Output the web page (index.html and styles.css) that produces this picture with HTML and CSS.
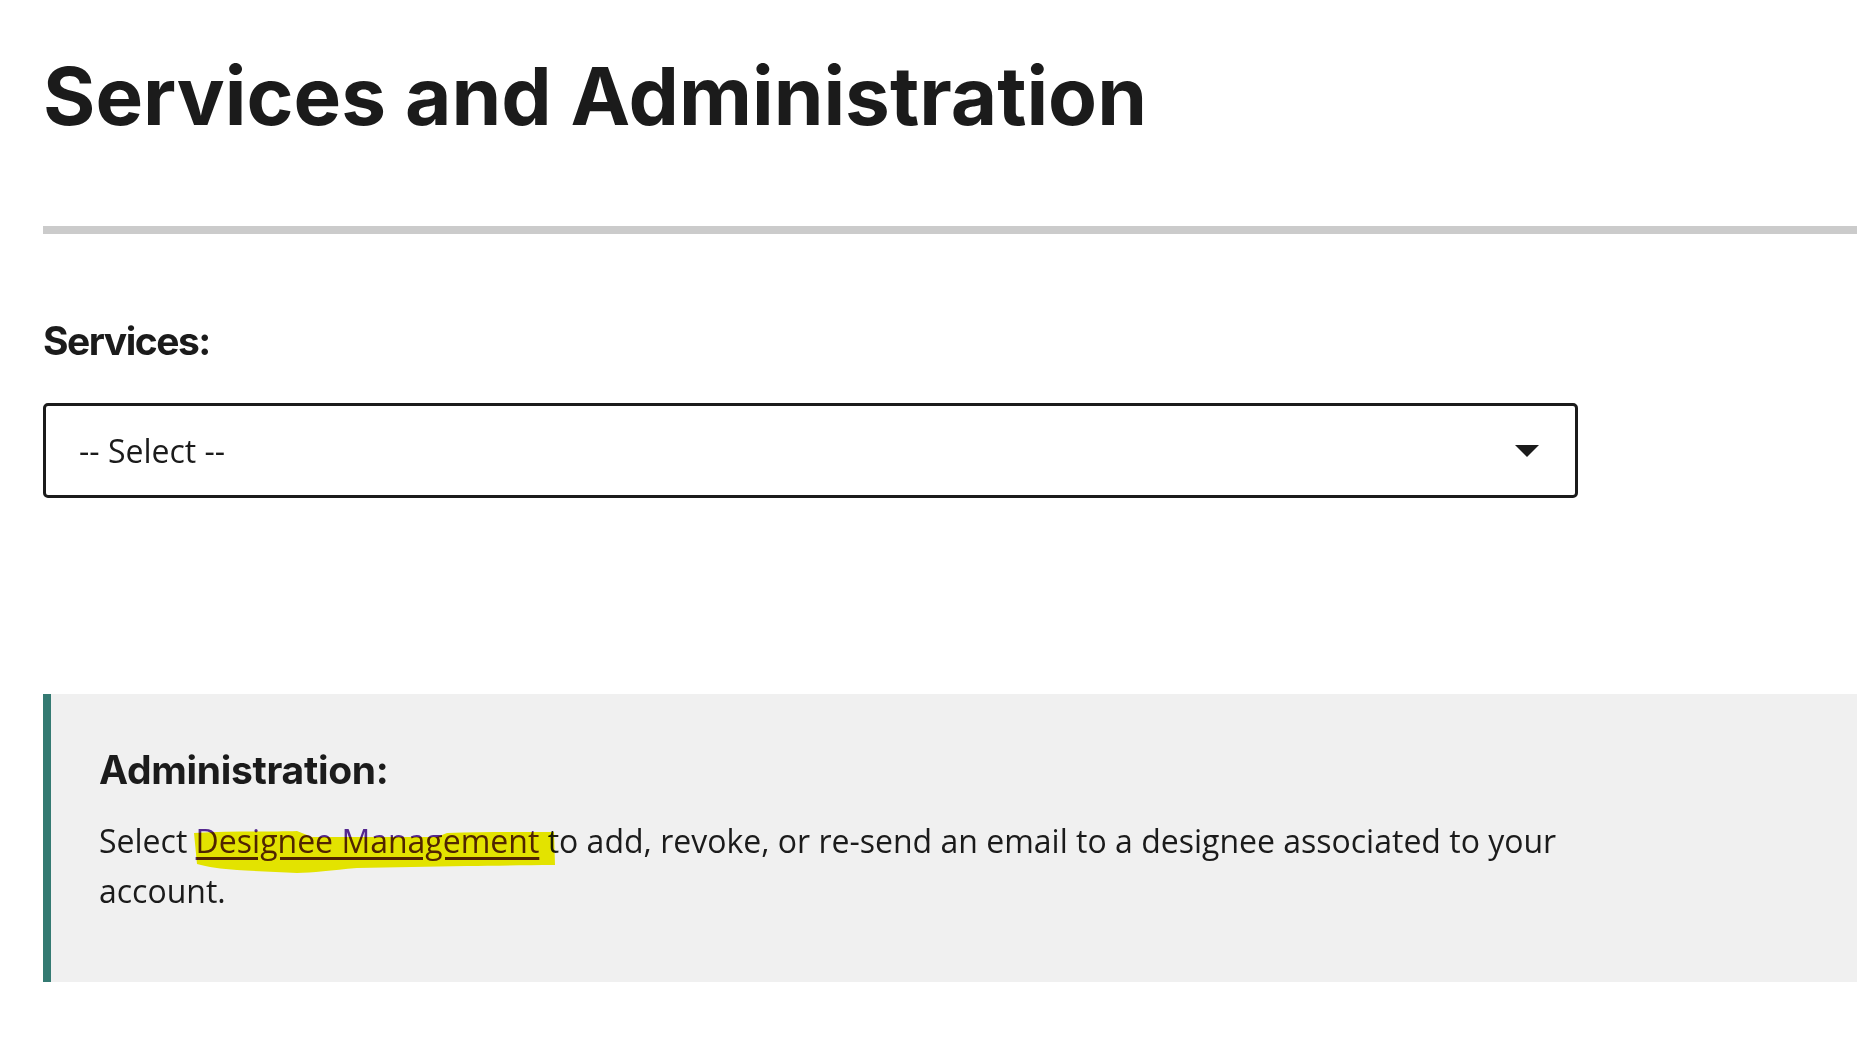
FILE: index.html
```html
<!DOCTYPE html>
<html lang="en">
<head>
<meta charset="utf-8">
<title>Services and Administration</title>
<link rel="stylesheet" href="styles.css">
</head>
<body>
<main class="page">
  <h1 class="title">Services and Administration</h1>
  <hr class="rule">
  <label class="field-label" for="services">Services:</label>
  <div class="select" id="services">
    <span class="select-value">-- Select --</span>
    <svg class="select-arrow" width="24" height="12" viewBox="0 0 24 12" aria-hidden="true"><path d="M0 0 H24 L12 12 Z" fill="#1b1b1b"/></svg>
  </div>
  <section class="admin">
    <h2 class="admin-title">Administration:</h2>
    <p class="admin-text">Select <span class="mark"><a class="link" href="#">Designee Management</a><svg class="marker" width="366" height="46" viewBox="0 0 366 46" aria-hidden="true"><path d="M2 4 C40 2 80 3 105 2 L120 8 L245 8 L255 4 C290 3 330 3 362 3 L363 36 C330 36 300 37 275 37 L165 39 C140 41 120 44 105 44 C85 43 60 42 45 41 C30 40 15 38 5 35 Z" fill="#f2f200"/></svg></span> to add, revoke, or re-send an email to a designee associated to your account.</p>
  </section>
</main>
</body>
</html>
```
FILE: styles.css
```css
html, body {
  margin: 0;
  padding: 0;
  background: #ffffff;
}

body {
  color: #1b1b1b;
  font-family: "Open Sans", "Liberation Sans", sans-serif;
  overflow: hidden;
}

.page {
  padding: 48px 0 0 43px;
}

.title {
  margin: 0;
  font-family: "Inter", "Lato", sans-serif;
  font-weight: 700;
  font-size: 80px;
  line-height: 96px;
  color: #1b1b1b;
}

.rule {
  margin: 82px 0 0 0;
  height: 8px;
  border: 0;
  background: #cbcbcb;
}

.field-label {
  display: block;
  margin-top: 83px;
  font-family: "Inter", "Lato", sans-serif;
  font-weight: 700;
  font-size: 39px;
  letter-spacing: -1.5px;
  line-height: 48px;
}

.select {
  margin-top: 38px;
  box-sizing: border-box;
  width: 1535px;
  height: 95px;
  border: 3px solid #1b1b1b;
  border-radius: 5px;
  display: flex;
  align-items: center;
  justify-content: space-between;
  padding: 0 36px 0 33px;
  font-size: 32px;
}

.select-arrow {
  display: block;
}

.admin {
  margin-top: 196px;
  box-sizing: border-box;
  height: 288px;
  background: #f0f0f0;
  border-left: 8px solid #347a72;
  padding: 52px 0 0 48px;
}

.admin-title {
  margin: 0;
  font-family: "Inter", "Lato", sans-serif;
  font-weight: 700;
  font-size: 39px;
  letter-spacing: -0.3px;
  line-height: 48px;
}

.admin-text {
  margin: 22px 0 0 0;
  max-width: 1540px;
  font-size: 32px;
  line-height: 50px;
}

.mark {
  position: relative;
}

.link {
  color: #54278f;
  text-decoration: underline;
  text-decoration-thickness: 3px;
  text-underline-offset: 4px;
}

.marker {
  position: absolute;
  left: -4px;
  top: 10px;
  mix-blend-mode: multiply;
  pointer-events: none;
}
```
